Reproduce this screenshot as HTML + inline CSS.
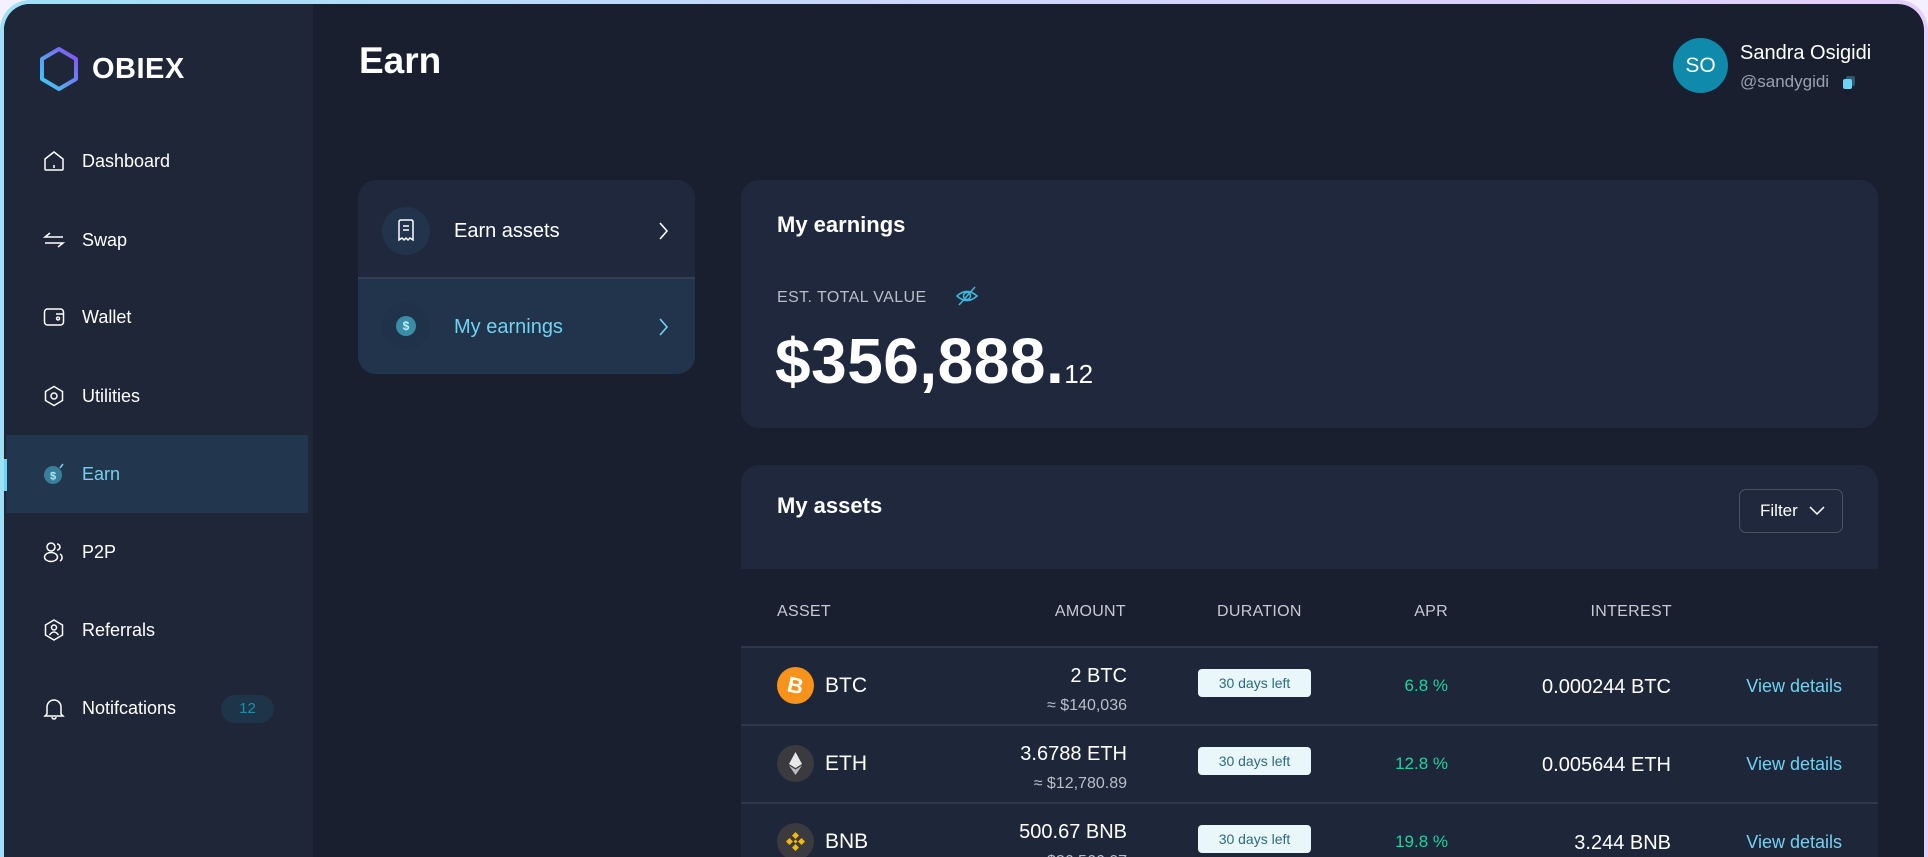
<!DOCTYPE html>
<html style="width:1928px;height:857px;overflow:hidden"><head><meta charset="utf-8"><style>
*{box-sizing:border-box;margin:0;padding:0}
body{width:1928px;height:857px;overflow:hidden;background:#f4f0ff;font-family:"Liberation Sans",sans-serif;position:relative}
.frame{position:absolute;left:0;top:0;width:1928px;height:857px;border-radius:30px 30px 0 0;background:linear-gradient(90deg,#9fe0f7,#cfd6fb 50%,#e4cffb)}
.app{position:absolute;left:4px;top:4px;width:1920px;height:853px;border-radius:26px 26px 0 0;background:#1a1f30;overflow:hidden}
.side{position:absolute;left:0;top:0;width:309px;height:853px;background:#1e2638}
.abs{position:absolute}
.nav{position:absolute;left:0;width:302px;height:78px;display:flex;align-items:center;padding-left:78px;color:#fff;font-size:18px}
.nav svg{position:absolute;left:39px;top:28px}
.card{position:absolute;background:#1f283c;border-radius:18px}
.th{position:absolute;top:599px;font-size:16px;color:#c5cad3;letter-spacing:.3px}
.row{position:absolute;left:737px;width:1137px;height:78px;background:#1e2639;border-top:2px solid #2f384b}
.r{position:absolute;text-align:right;color:#fff}
.badge{position:absolute;left:457px;width:113px;height:28px;background:#e9f7fb;border-radius:4px;color:#2d6a7c;font-size:14px;text-align:center;line-height:28px}
.coin{position:absolute;left:36px;top:19px;width:37px;height:37px;border-radius:50%}
.nm{position:absolute;left:84px;top:26px;font-size:21px;color:#fff}
.apr{position:absolute;right:430px;top:28px;color:#20d3a0;font-size:17px}
.int{position:absolute;right:207px;top:28px;color:#fff;font-size:20px}
.vd{position:absolute;right:36px;top:28px;color:#6fd3f2;font-size:18px}
</style></head><body>
<div class="frame"></div>
<div class="app">
 <div class="side">
  <svg class="abs" style="left:34px;top:42px" width="42" height="46" viewBox="0 0 42 46"><defs><linearGradient id="g" x1="0" y1="1" x2="1" y2="0"><stop offset="0" stop-color="#3fd0f0"/><stop offset="1" stop-color="#8a4df5"/></linearGradient></defs><path d="M21 3 L38 13 L38 33 L21 43 L4 33 L4 13 Z" fill="none" stroke="url(#g)" stroke-width="4" stroke-linejoin="round"/></svg>
  <div class="abs" style="left:88px;top:49px;font-size:29px;font-weight:bold;color:#fff;letter-spacing:.5px">OBIEX</div>
  <div class="nav" style="top:118px"><svg width="22" height="22" viewBox="0 0 22 22" fill="none" stroke="#fff" stroke-width="1.5"><path d="M2 9 L11 2 L20 9 V19 Q20 20 19 20 H3 Q2 20 2 19 Z M11 15 V18"/></svg>Dashboard</div>
  <div class="nav" style="top:197px"><svg width="22" height="22" viewBox="0 0 22 22" fill="none" stroke="#fff" stroke-width="1.5"><path d="M20 8 H2 L7 4 M2 14 H20 L15 18"/></svg>Swap</div>
  <div class="nav" style="top:274px"><svg width="22" height="22" viewBox="0 0 22 22" fill="none" stroke="#fff" stroke-width="1.5"><rect x="1.5" y="3" width="19" height="16" rx="3"/><path d="M13 8 H20 M15 11 a1.5 1.5 0 1 0 0.1 0"/></svg>Wallet</div>
  <div class="nav" style="top:353px"><svg width="22" height="22" viewBox="0 0 22 22" fill="none" stroke="#fff" stroke-width="1.5"><path d="M11 1.5 L19.5 6.5 V15.5 L11 20.5 L2.5 15.5 V6.5 Z"/><circle cx="11" cy="11" r="3"/></svg>Utilities</div>
  <div class="abs" style="left:2px;top:431px;width:302px;height:78px;background:#22364d"></div>
  <div class="abs" style="left:0;top:455px;width:3px;height:32px;background:#6fd3f2"></div>
  <div class="nav" style="top:431px;color:#6fd3f2"><svg width="22" height="22" viewBox="0 0 22 22"><circle cx="10" cy="12" r="9" fill="#3a7f99"/><text x="10" y="16.5" font-size="11" text-anchor="middle" fill="#aee9fb" font-family="Liberation Sans" font-weight="bold">$</text><path d="M17 5 L20 1" stroke="#6fd3f2" stroke-width="1.5"/></svg>Earn</div>
  <div class="nav" style="top:509px"><svg width="22" height="22" viewBox="0 0 22 22" fill="none" stroke="#fff" stroke-width="1.5"><circle cx="8" cy="6" r="4"/><ellipse cx="8" cy="16" rx="6.5" ry="4.5"/><path d="M14 3 a3 3 0 0 1 0 6 M17 13 a4 4 0 0 1 0 7"/></svg>P2P</div>
  <div class="nav" style="top:587px"><svg width="22" height="22" viewBox="0 0 22 22" fill="none" stroke="#fff" stroke-width="1.5"><path d="M11 1 L19.5 6 V16 L11 21 L2.5 16 V6 Z"/><circle cx="11" cy="8.5" r="2.5"/><path d="M6.5 16 Q11 10 15.5 16"/></svg>Referrals</div>
  <div class="nav" style="top:665px"><svg width="22" height="24" viewBox="0 0 22 24" fill="none" stroke="#fff" stroke-width="1.5"><path d="M4 17 V10 a7 7 0 0 1 14 0 V17 L20 19 H2 Z M9 20 a2 2 0 0 0 4 0"/></svg>Notifcations</div>
  <div class="abs" style="left:217px;top:691px;width:53px;height:28px;border-radius:14px;background:#1e3448;color:#1a8fb3;font-size:15px;text-align:center;line-height:28px">12</div>
 </div>

 <div class="abs" style="left:355px;top:36px;font-size:37px;font-weight:bold;color:#fff">Earn</div>
 <div class="abs" style="left:1669px;top:34px;width:55px;height:55px;border-radius:50%;background:#0f8aab;color:#fff;font-size:21px;text-align:center;line-height:55px">SO</div>
 <div class="abs" style="left:1736px;top:38px;font-size:20px;color:#fff">Sandra Osigidi</div>
 <div class="abs" style="left:1736px;top:68px;font-size:17px;color:#9aa1ae">@sandygidi</div>
 <div class="abs" style="left:1842px;top:72px;width:9px;height:10px;border-radius:2px;background:#2a5b6e"></div>
 <div class="abs" style="left:1839px;top:75px;width:9px;height:10px;border-radius:2px;background:#6fd3f2"></div>

 <div class="card" style="left:354px;top:176px;width:337px;height:194px;overflow:hidden">
  <div class="abs" style="left:0;top:97px;width:337px;height:97px;background:#22344c;border-top:2px solid #363f52"></div>
  <div class="abs" style="left:24px;top:27px;width:48px;height:48px;border-radius:50%;background:#22344b"></div>
  <svg class="abs" style="left:39px;top:39px" width="18" height="24" viewBox="0 0 18 24" fill="none" stroke="#fff" stroke-width="1.5"><path d="M2 3 Q2 1 4 1 H14 Q16 1 16 3 V21 L13 19 L11 21 L9 19 L7 21 L5 19 L2 21 Z M6 7 H12 M6 11 H12"/></svg>
  <div class="abs" style="left:96px;top:40px;font-size:20px;color:#fff">Earn assets</div>
  <svg class="abs" style="left:299px;top:40px" width="12" height="22" viewBox="0 0 12 22" fill="none" stroke="#fff" stroke-width="1.6"><path d="M3 3 L10 11 L3 19"/></svg>
  <div class="abs" style="left:24px;top:122px;width:48px;height:48px;border-radius:50%;background:#1f3249"></div>
  <div class="abs" style="left:38px;top:136px;width:20px;height:20px;border-radius:50%;background:#3a8da6;color:#bfefff;font-size:12px;font-weight:bold;text-align:center;line-height:20px">$</div>
  <div class="abs" style="left:96px;top:136px;font-size:20px;color:#6fd3f2">My earnings</div>
  <svg class="abs" style="left:299px;top:136px" width="12" height="22" viewBox="0 0 12 22" fill="none" stroke="#6fd3f2" stroke-width="1.6"><path d="M3 3 L10 11 L3 19"/></svg>
 </div>

 <div class="card" style="left:737px;top:176px;width:1137px;height:248px">
  <div class="abs" style="left:36px;top:32px;font-size:22px;font-weight:bold;color:#fff">My earnings</div>
  <div class="abs" style="left:36px;top:109px;font-size:16px;color:#b9bec8;letter-spacing:.4px">EST. TOTAL VALUE</div>
  <svg class="abs" style="left:214px;top:104px" width="24" height="24" viewBox="0 0 24 24" fill="none" stroke="#3fb6d8" stroke-width="1.6"><path d="M2 12 Q12 3 22 12 Q12 21 2 12 Z"/><circle cx="12" cy="12" r="3.5"/><path d="M4 21 L20 3"/></svg>
  <div class="abs" style="left:34px;top:144px;font-size:64px;font-weight:bold;color:#fff;white-space:nowrap;letter-spacing:.5px">$356,888.<span style="font-size:26px;font-weight:normal;letter-spacing:0">12</span></div>
 </div>

 <div class="card" style="left:737px;top:461px;width:1137px;height:400px;border-radius:18px 18px 0 0"></div>
 <div class="abs" style="left:773px;top:489px;font-size:22px;font-weight:bold;color:#fff">My assets</div>
 <div class="abs" style="left:1735px;top:485px;width:104px;height:44px;border:1.5px solid #4a5264;border-radius:7px;color:#fff;font-size:17px;line-height:41px;padding-left:20px">Filter</div>
 <svg class="abs" style="left:1805px;top:502px" width="16" height="10" viewBox="0 0 16 10" fill="none" stroke="#fff" stroke-width="1.5"><path d="M1 1 L8 8 L15 1"/></svg>
 <div class="abs" style="left:737px;top:565px;width:1137px;height:81px;background:#1a1f30"></div>
 <div class="th" style="left:773px">ASSET</div>
 <div class="th" style="left:1000px;width:122px;text-align:right">AMOUNT</div>
 <div class="th" style="left:1213px">DURATION</div>
 <div class="th" style="left:1380px;width:64px;text-align:right">APR</div>
 <div class="th" style="left:1550px;width:118px;text-align:right">INTEREST</div>

 <div class="row" style="top:642px">
  <div class="coin" style="background:#f7931a"><svg width="37" height="37" viewBox="0 0 37 37"><text x="18.5" y="26" text-anchor="middle" font-size="22" font-weight="bold" fill="#fff" font-family="Liberation Sans" transform="rotate(12 18.5 18.5)">B</text></svg></div>
  <div class="nm">BTC</div>
  <div class="r" style="right:751px;top:17px;font-size:20px">2 BTC</div>
  <div class="r" style="right:751px;top:49px;font-size:16px;color:#b9bec8">≈ $140,036</div>
  <div class="badge" style="top:21px">30 days left</div>
  <div class="apr">6.8 %</div><div class="int">0.000244 BTC</div><div class="vd">View details</div>
 </div>
 <div class="row" style="top:720px">
  <div class="coin" style="background:#3b3b3f"><svg width="37" height="37" viewBox="0 0 37 37"><path d="M18.5 7 L25 19 L18.5 23 L12 19 Z" fill="#e8e8e8"/><path d="M18.5 24.5 L25 20.5 L18.5 30 L12 20.5 Z" fill="#bcbcbc"/></svg></div>
  <div class="nm">ETH</div>
  <div class="r" style="right:751px;top:17px;font-size:20px">3.6788 ETH</div>
  <div class="r" style="right:751px;top:49px;font-size:16px;color:#b9bec8">≈ $12,780.89</div>
  <div class="badge" style="top:21px">30 days left</div>
  <div class="apr">12.8 %</div><div class="int">0.005644 ETH</div><div class="vd">View details</div>
 </div>
 <div class="row" style="top:798px">
  <div class="coin" style="background:#3b3b3f"><svg width="37" height="37" viewBox="0 0 37 37" fill="#f0b90b"><path d="M18.5 9 L22 12.5 L18.5 16 L15 12.5 Z M18.5 21 L22 24.5 L18.5 28 L15 24.5 Z M12.5 15 L16 18.5 L12.5 22 L9 18.5 Z M24.5 15 L28 18.5 L24.5 22 L21 18.5 Z M18.5 16.5 L20.5 18.5 L18.5 20.5 L16.5 18.5 Z"/></svg></div>
  <div class="nm">BNB</div>
  <div class="r" style="right:751px;top:17px;font-size:20px">500.67 BNB</div>
  <div class="r" style="right:751px;top:49px;font-size:16px;color:#b9bec8">≈ $26,566.07</div>
  <div class="badge" style="top:21px">30 days left</div>
  <div class="apr">19.8 %</div><div class="int">3.244 BNB</div><div class="vd">View details</div>
 </div>
</div>
</body></html>
